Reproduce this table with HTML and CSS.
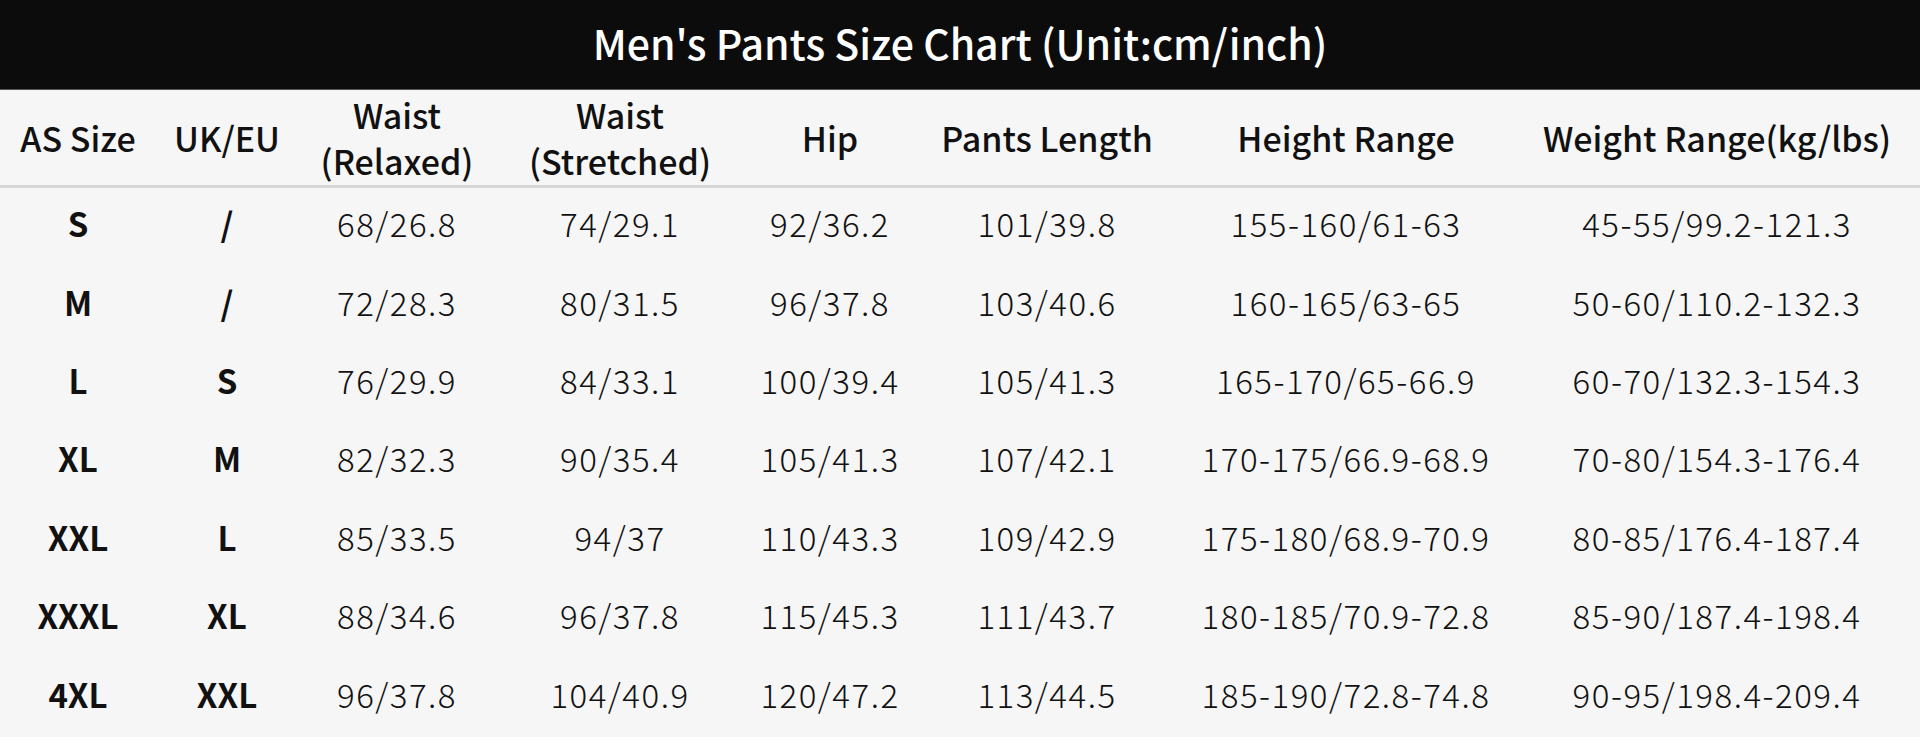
FILE: index.html
```html
<!DOCTYPE html>
<html lang="en">
<head>
<meta charset="utf-8">
<title>Men's Pants Size Chart</title>
<link rel="stylesheet" href="styles.css">
</head>
<body>
<div class="chart">
  <div class="title"><span class="t">Men's Pants Size Chart (Unit:cm/inch)</span></div>
  <div class="grid head">
    <div class="c"><span class="t">AS Size</span></div>
    <div class="c"><span class="t">UK/EU</span></div>
    <div class="c"><span class="t">Waist<br>(Relaxed)</span></div>
    <div class="c"><span class="t">Waist<br>(Stretched)</span></div>
    <div class="c"><span class="t">Hip</span></div>
    <div class="c"><span class="t">Pants Length</span></div>
    <div class="c"><span class="t">Height Range</span></div>
    <div class="c"><span class="t">Weight Range(kg/lbs)</span></div>
  </div>
  <div class="body">
    <div class="grid row">
      <div class="c b"><span class="t">S</span></div><div class="c b"><span class="t">/</span></div>
      <div class="c"><span class="t">68/26.8</span></div><div class="c"><span class="t">74/29.1</span></div>
      <div class="c"><span class="t">92/36.2</span></div><div class="c"><span class="t">101/39.8</span></div>
      <div class="c"><span class="t">155-160/61-63</span></div><div class="c"><span class="t">45-55/99.2-121.3</span></div>
    </div>
    <div class="grid row">
      <div class="c b"><span class="t">M</span></div><div class="c b"><span class="t">/</span></div>
      <div class="c"><span class="t">72/28.3</span></div><div class="c"><span class="t">80/31.5</span></div>
      <div class="c"><span class="t">96/37.8</span></div><div class="c"><span class="t">103/40.6</span></div>
      <div class="c"><span class="t">160-165/63-65</span></div><div class="c"><span class="t">50-60/110.2-132.3</span></div>
    </div>
    <div class="grid row">
      <div class="c b"><span class="t">L</span></div><div class="c b"><span class="t">S</span></div>
      <div class="c"><span class="t">76/29.9</span></div><div class="c"><span class="t">84/33.1</span></div>
      <div class="c"><span class="t">100/39.4</span></div><div class="c"><span class="t">105/41.3</span></div>
      <div class="c"><span class="t">165-170/65-66.9</span></div><div class="c"><span class="t">60-70/132.3-154.3</span></div>
    </div>
    <div class="grid row">
      <div class="c b"><span class="t">XL</span></div><div class="c b"><span class="t">M</span></div>
      <div class="c"><span class="t">82/32.3</span></div><div class="c"><span class="t">90/35.4</span></div>
      <div class="c"><span class="t">105/41.3</span></div><div class="c"><span class="t">107/42.1</span></div>
      <div class="c"><span class="t">170-175/66.9-68.9</span></div><div class="c"><span class="t">70-80/154.3-176.4</span></div>
    </div>
    <div class="grid row">
      <div class="c b"><span class="t">XXL</span></div><div class="c b"><span class="t">L</span></div>
      <div class="c"><span class="t">85/33.5</span></div><div class="c"><span class="t">94/37</span></div>
      <div class="c"><span class="t">110/43.3</span></div><div class="c"><span class="t">109/42.9</span></div>
      <div class="c"><span class="t">175-180/68.9-70.9</span></div><div class="c"><span class="t">80-85/176.4-187.4</span></div>
    </div>
    <div class="grid row">
      <div class="c b"><span class="t">XXXL</span></div><div class="c b"><span class="t">XL</span></div>
      <div class="c"><span class="t">88/34.6</span></div><div class="c"><span class="t">96/37.8</span></div>
      <div class="c"><span class="t">115/45.3</span></div><div class="c"><span class="t">111/43.7</span></div>
      <div class="c"><span class="t">180-185/70.9-72.8</span></div><div class="c"><span class="t">85-90/187.4-198.4</span></div>
    </div>
    <div class="grid row">
      <div class="c b"><span class="t">4XL</span></div><div class="c b"><span class="t">XXL</span></div>
      <div class="c"><span class="t">96/37.8</span></div><div class="c"><span class="t">104/40.9</span></div>
      <div class="c"><span class="t">120/47.2</span></div><div class="c"><span class="t">113/44.5</span></div>
      <div class="c"><span class="t">185-190/72.8-74.8</span></div><div class="c"><span class="t">90-95/198.4-209.4</span></div>
    </div>
  </div>
</div>
</body>
</html>
```

FILE: styles.css
```css
* { box-sizing: border-box; }
html, body { margin: 0; padding: 0; }
body {
  width: 1920px;
  height: 737px;
  overflow: hidden;
  background: #f6f6f6;
  font-family: "Noto Sans CJK SC", "Noto Sans", sans-serif;
  color: #111;
}
.chart { display: flex; flex-direction: column; height: 737px; }
.title {
  height: 90px;
  padding-bottom: 6px;
  background: #0c0c0c;
  border-bottom: 1px solid #555;
  color: #fff;
  font-size: 41px;
  font-weight: 500;
  display: flex;
  align-items: center;
  justify-content: center;
}
.t { display: inline-block; }
.grid {
  display: grid;
  grid-template-columns: 156px 142px 198px 248px 172px 262px 336px 406px;
}
.c {
  display: flex;
  align-items: center;
  justify-content: center;
  text-align: center;
}
.head {
  height: 98px;
  font-size: 34px;
  font-weight: 500;
  line-height: 46px;
  border-bottom: 3px solid #d6d6d6;
}
.body { flex: 1; display: flex; flex-direction: column; }
.row { flex: 1; font-size: 33px; font-weight: 300; letter-spacing: 1.5px; }
.row .c { padding-bottom: 8px; }
.row .b { font-weight: 700; letter-spacing: 0; }
```
